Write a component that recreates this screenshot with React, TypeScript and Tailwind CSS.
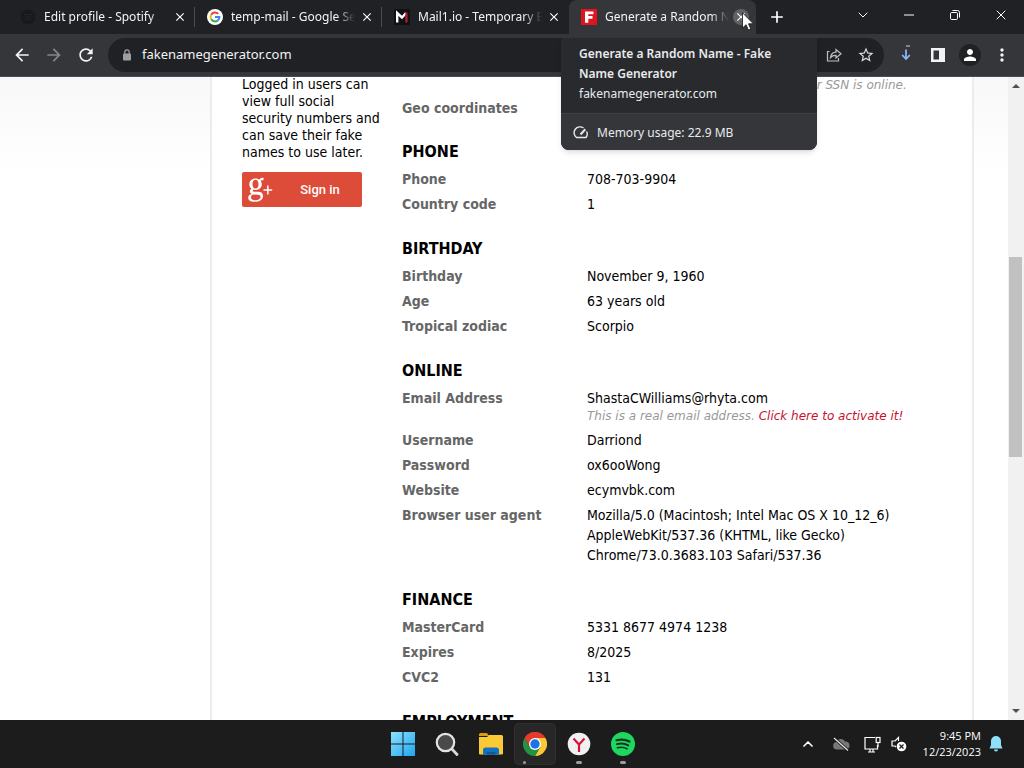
import React from "react";
import {
  MdArrowBack,
  MdArrowForward,
  MdRefresh,
  MdStarBorder,
  MdPerson,
  MdMoreVert,
  MdAdd,
  MdClose,
} from "react-icons/md";
import { ChevronDown, ChevronUp, Minus, X } from "lucide-react";

const uiFont = "font-['Noto_Sans','Open_Sans',sans-serif]";
const pageFont = "font-['DejaVu_Sans_Condensed','Noto_Sans',sans-serif]";

/* Favicons */

const SpotifyDarkIcon = () => (
  <svg viewBox="0 0 16 16" className="size-4">
    <circle cx="8" cy="8" r="7.5" fill="#17191b" />
    <path
      d="M4 5.8q4.5-1.3 8.4.6M4.5 8.3q3.8-1 7 .6M5 10.6q3-.7 5.6.5"
      fill="none"
      stroke="#222427"
      strokeWidth="1.2"
    />
  </svg>
);

const GoogleIcon = () => (
  <svg viewBox="0 0 16 16" className="size-4">
    <circle cx="8" cy="8" r="8" fill="#fff" />
    <g fill="none" strokeWidth="2">
      <path d="M11.2 4.9A4.4 4.4 0 0 0 4.2 5.8" stroke="#ea4335" />
      <path d="M4.2 5.8A4.4 4.4 0 0 0 4.2 10.2" stroke="#fbbc05" />
      <path d="M4.2 10.2A4.4 4.4 0 0 0 10.8 11.4" stroke="#34a853" />
      <path d="M10.8 11.4A4.4 4.4 0 0 0 12.4 8H8" stroke="#4285f4" />
    </g>
  </svg>
);

const MailIcon = () => (
  <svg viewBox="0 0 16 16" className="size-4">
    <rect width="16" height="16" fill="#111114" />
    <path d="M3.200 13.500V4L8 8.500 12 4" fill="none" stroke="#fff" strokeWidth="2.400" />
    <path d="M12.400 3.500v10" stroke="#b3202c" strokeWidth="2.200" />
  </svg>
);

const FakeNameIcon = () => (
  <svg viewBox="0 0 16 16" className="size-4">
    <rect width="16" height="16" fill="#e0141f" />
    <path d="M4 2.5h8.5v2.8H7.3v1.8h4.2v2.7H7.3v4H4z" fill="#fff" />
  </svg>
);

type Tab = {
  title: string;
  icon: React.ReactNode;
  active?: boolean;
  separator?: boolean;
};

const tabs: Tab[] = [
  { title: "Edit profile - Spotify", icon: <SpotifyDarkIcon />, separator: true },
  { title: "temp-mail - Google Search", icon: <GoogleIcon />, separator: true },
  { title: "Mail1.io - Temporary Email", icon: <MailIcon /> },
  { title: "Generate a Random Name", icon: <FakeNameIcon />, active: true },
];

const TabStrip = () => (
  <div className="flex h-[34px] shrink-0 bg-[#202124] pl-2">
    {tabs.map((tab) => (
      <div
        key={tab.title}
        className={`flex w-[187px] items-center py-2 pr-[7px] pl-3 ${
          tab.active ? "rounded-t-lg bg-[#35363a]" : ""
        } ${tab.separator ? "bg-[linear-gradient(#4a4c50,#4a4c50)] bg-[length:1px_20px] bg-right bg-no-repeat" : ""}`}
      >
        {tab.icon}
        <span className="ml-2 min-w-0 flex-1 overflow-hidden [mask-image:linear-gradient(to_right,#000_85%,transparent)] text-xs whitespace-nowrap text-[#f1f3f4]">
          {tab.title}
        </span>
        <button
          aria-label={`Close ${tab.title}`}
          className={`ml-1 flex size-4 items-center justify-center rounded-full text-white ${
            tab.active ? "bg-[#5f6368]" : ""
          }`}
        >
          <MdClose className="size-3.5" />
        </button>
      </div>
    ))}
    <button aria-label="New tab" className="flex w-[42px] items-center justify-center text-white">
      <MdAdd className="size-5" />
    </button>
    <div className="ml-auto flex h-[30px] text-white">
      <button aria-label="Search tabs" className="flex w-[46px] items-center justify-center">
        <ChevronDown className="size-4" strokeWidth={1.5} />
      </button>
      <button aria-label="Minimize" className="flex w-[46px] items-center justify-center">
        <Minus className="size-4" strokeWidth={1.5} />
      </button>
      <button aria-label="Restore" className="flex w-[46px] items-center justify-center">
        <svg viewBox="0 0 12 12" className="size-3" fill="none" stroke="currentColor">
          <rect x="1.500" y="3.500" width="7" height="7" rx="1.200" />
          <path d="M3.500 1.500H8.500a2 2 0 0 1 2 2v5" />
        </svg>
      </button>
      <button aria-label="Close" className="flex w-[46px] items-center justify-center">
        <X className="size-4" strokeWidth={1.5} />
      </button>
    </div>
  </div>
);

const toolButton = "flex size-8 items-center justify-center";

const Toolbar = () => (
  <div className="flex h-[43px] shrink-0 items-center border-b border-[#4a4b4f] bg-[#35363a] px-1.5 text-[#f1f3f4]">
    <button aria-label="Back" className={toolButton}>
      <MdArrowBack className="size-5" />
    </button>
    <button aria-label="Forward" className={`${toolButton} text-[#85878b]`}>
      <MdArrowForward className="size-5" />
    </button>
    <button aria-label="Reload" className={toolButton}>
      <MdRefresh className="size-5" />
    </button>
    <div className="mx-1.5 flex h-[34px] flex-1 items-center rounded-full bg-[#202124] pr-0.5 pl-3">
      <svg viewBox="0 0 14 14" className="size-3.5">
        <rect x="3" y="5.500" width="8" height="7" rx="1" fill="#9aa0a6" />
        <path d="M4.800 6V4a2.200 2.200 0 0 1 4.400 0v2" fill="none" stroke="#9aa0a6" strokeWidth="1.200" />
      </svg>
      <input
        aria-label="Address"
        readOnly
        value="fakenamegenerator.com"
        className="ml-2 min-w-0 flex-1 bg-transparent text-[13px] text-[#f1f3f4] outline-none"
      />
      <button aria-label="Share" className={`${toolButton} text-[#bdc1c6]`}>
        <svg viewBox="0 0 16 16" className="size-4" fill="none" stroke="currentColor" strokeWidth="1.2">
          <path d="M3.500 4.500H1.500v9.500h11v-3" />
          <path d="M4.500 10.500c.6-3.600 2.600-5.200 5.500-5.300V2.500l5 4.200-5 4.200V8.300c-2.300-.1-4.100.5-5.500 2.200z" />
        </svg>
      </button>
      <button aria-label="Bookmark" className={`${toolButton} text-[#dadce0]`}>
        <MdStarBorder className="size-[18px]" />
      </button>
    </div>
    <button aria-label="Downloads" className={toolButton}>
      <svg viewBox="0 0 20 20" className="size-5" fill="none">
        <path d="M10 1h4" stroke="#9aa0a6" strokeWidth="1.5" />
        <path d="M10 4.500v9.500M6.200 10l3.800 4 3.800-4" stroke="#8ab4f8" strokeWidth="1.8" />
      </svg>
    </button>
    <button aria-label="Side panel" className={toolButton}>
      <svg viewBox="0 0 14 14" className="size-3.5">
        <path d="M0 0h14v14H0zM2.500 2.500v9H8v-9z" fill="currentColor" fillRule="evenodd" />
      </svg>
    </button>
    <button aria-label="Profile" className={toolButton}>
      <span className="flex size-[22px] items-center justify-center rounded-full bg-[#202124] text-white">
        <MdPerson className="size-[18px]" />
      </span>
    </button>
    <button aria-label="Menu" className={toolButton}>
      <MdMoreVert className="size-5" />
    </button>
  </div>
);

const TabHoverCard = () => (
  <div
    role="tooltip"
    className="absolute top-[38px] left-[561px] z-10 w-64 overflow-hidden rounded-b-lg bg-[#292a2d] text-xs leading-5 text-[#e8eaed] shadow-md"
  >
    <div className="px-[18px] pt-1.5 pb-[9px]">
      <p className="font-semibold">Generate a Random Name - Fake Name Generator</p>
      <p>fakenamegenerator.com</p>
    </div>
    <div className="flex h-[37px] items-center gap-2 border-t border-[#3f4043] bg-[#35363a] px-3 pt-px">
      <svg viewBox="0 0 16 16" className="size-4" fill="none" stroke="currentColor" strokeWidth="1.400">
        <path d="M10.500 3A5.600 5.600 0 0 0 3.500 12.500h9.500a5.600 5.600 0 0 0 .6-6" />
        <path d="M7.500 9.500 12.300 4.300" strokeWidth="2" />
      </svg>
      <span>Memory usage: 22.9 MB</span>
    </div>
  </div>
);

const MouseCursor = () => (
  <svg viewBox="0 0 12 19" className="absolute top-[12px] left-[742px] z-20 h-[19px] w-3">
    <path
      d="M.500 .800v15.200l3.600-3.300 2.300 5.400 2.400-1-2.300-5.300h4.900z"
      fill="#fff"
      stroke="#111"
      strokeWidth=".8"
    />
  </svg>
);

/* Page content */

const Row = ({ label, children }: { label: string; children?: React.ReactNode }) => (
  <div className="flex pb-[5px]">
    <dt className="w-[185px] shrink-0 font-bold text-[#666]">{label}</dt>
    <dd className="min-w-0 flex-1 text-black">{children}</dd>
  </div>
);

const Section = ({ title, children }: { title: string; children?: React.ReactNode }) => (
  <section className="mt-5">
    <h3 className="mb-[7px] text-base leading-5 font-bold text-black">{title}</h3>
    <dl>{children}</dl>
  </section>
);

const noteClass = "text-xs leading-[17px] text-[#999] italic font-['DejaVu_Sans',sans-serif]";

const Sidebar = () => (
  <aside className="w-[160px] shrink-0">
    <p className="-mt-px w-[140px] text-sm leading-[17px] text-black">
      Logged in users can view full social security numbers and can save their fake names to use
      later.
    </p>
    <button className="mt-[11px] flex h-[35px] w-[120px] items-center rounded-xs bg-[#dd4b39] text-white">
      <svg viewBox="0 0 28 28" className="ml-1 h-7 w-7" fill="#fff">
        <path
          d="M9.500 2.500c3.800 0 6.300 2.500 6.300 5.700s-2.500 5.700-6.300 5.700S3.300 11.400 3.300 8.200s2.400-5.700 6.200-5.700zm0 1.300c-1.900 0-3 1.600-3 4.400s1.100 4.400 3 4.400 3-1.600 3-4.400-1.100-4.400-3-4.400z"
          fillRule="evenodd"
        />
        <path d="M13 4.200c1-1.800 2.200-2.400 4.500-2.400v2.400c-1.700-.2-2.500 0-3.500 1z" />
        <path
          d="M5.500 12.800l2 .7c-1.300 1.200-1 2.200 1.500 2.200h3c3.300 0 5 1.600 5 4.200 0 3.600-3.400 5.800-8.300 5.800-4.200 0-6.500-1.500-6.500-4 0-1.900 1.300-3.200 3.700-3.900-2.800-1.200-2.600-3.400-.4-5zM7 18.500c-1.300.6-2 1.500-2 2.700 0 1.900 1.500 3 4.200 3 3.300 0 5.400-1.200 5.400-3.200 0-1.600-1-2.100-3-2.200z"
          fillRule="evenodd"
        />
        <path d="M17.500 13.300h3.600V9.500h1.500v3.800h3.600v1.500h-3.600v3.800h-1.500v-3.800h-3.600z" />
      </svg>
      <span className="flex-1 pl-1 text-center font-[Roboto,sans-serif] text-[13px] font-medium">
        Sign in
      </span>
    </button>
  </aside>
);

const Details = () => (
  <main className="min-w-0 flex-1 text-sm leading-5">
    <p className={`ml-[185px] whitespace-nowrap ${noteClass}`}>
      You should click here to find out if your SSN is online.
    </p>
    <dl className="mt-1 -mb-px">
      <Row label="Geo coordinates" />
    </dl>
    <Section title="PHONE">
      <Row label="Phone">708-703-9904</Row>
      <Row label="Country code">1</Row>
    </Section>
    <Section title="BIRTHDAY">
      <Row label="Birthday">November 9, 1960</Row>
      <Row label="Age">63 years old</Row>
      <Row label="Tropical zodiac">Scorpio</Row>
    </Section>
    <Section title="ONLINE">
      <Row label="Email Address">
        ShastaCWilliams@rhyta.com
        <p className={noteClass}>
          This is a real email address.{" "}
          <a href="#activate" className="text-[#c8102e]">
            Click here to activate it!
          </a>
        </p>
      </Row>
      <Row label="Username">Darriond</Row>
      <Row label="Password">ox6ooWong</Row>
      <Row label="Website">ecymvbk.com</Row>
      <Row label="Browser user agent">
        Mozilla/5.0 (Macintosh; Intel Mac OS X 10_12_6)
        <br />
        AppleWebKit/537.36 (KHTML, like Gecko)
        <br />
        Chrome/73.0.3683.103 Safari/537.36
      </Row>
    </Section>
    <Section title="FINANCE">
      <Row label="MasterCard">5331 8677 4974 1238</Row>
      <Row label="Expires">8/2025</Row>
      <Row label="CVC2">131</Row>
    </Section>
    <Section title="EMPLOYMENT" />
  </main>
);

const Scrollbar = () => (
  <div className="flex w-4 shrink-0 flex-col bg-[#f1f1f1] text-[#505050]">
    <svg viewBox="0 0 16 17" className="h-[17px] w-4">
      <path d="M4 11h8L8 7z" fill="currentColor" />
    </svg>
    <div className="mt-[163px] ml-px h-[200px] w-[13px] bg-[#c1c1c1]" />
    <svg viewBox="0 0 16 17" className="mt-auto h-[17px] w-4">
      <path d="M4 6h8l-4 4z" fill="currentColor" />
    </svg>
  </div>
);

/* Taskbar */

const WindowsIcon = () => (
  <svg viewBox="0 0 24 24" className="size-6">
    <defs>
      <linearGradient id="win" x1="0" y1="0" x2="1" y2="1">
        <stop offset="0" stopColor="#8be2ff" />
        <stop offset="1" stopColor="#1fa5f0" />
      </linearGradient>
    </defs>
    <path d="M0 0h11.500v11.500H0zM12.500 0H24v11.500H12.500zM0 12.500h11.500V24H0zM12.500 12.500H24V24H12.500z" fill="url(#win)" />
  </svg>
);

const SearchIcon = () => (
  <svg viewBox="0 0 24 24" className="size-6">
    <path d="m16.500 16.500 5.500 6" stroke="#d8d8d8" strokeWidth="2.800" strokeLinecap="round" />
    <circle cx="10.500" cy="10.500" r="8.700" fill="#4a4a4a" stroke="#e4e4e4" strokeWidth="2.200" />
  </svg>
);

const FolderIcon = () => (
  <svg viewBox="0 0 24 24" className="size-6">
    <path d="M0 2.500A1.500 1.500 0 0 1 1.500 1H8l2 3H0z" fill="#d99b13" />
    <path d="M0 5h8l2-2h12.500A1.500 1.500 0 0 1 24 4.500v17a1 1 0 0 1-1 1H1a1 1 0 0 1-1-1z" fill="#fbc935" />
    <path d="M4 22.500V18a2.500 2.500 0 0 1 2.500-2.500h11A2.500 2.500 0 0 1 20 18v4.500z" fill="#1172c4" />
    <path d="M7.500 22.500V20h9v2.500z" fill="#0b589d" />
  </svg>
);

const ChromeIcon = () => (
  <svg viewBox="0 0 24 24" className="size-6">
    <path d="M12 12 1.600 6A12 12 0 0 1 22.400 6z" fill="#e33b2e" />
    <path d="M12 12V6h10.400A12 12 0 0 1 12 24l5.200-9z" fill="#fcc934" />
    <path d="M12 12l5.200 3L12 24A12 12 0 0 1 1.600 6l5.200 9z" fill="#229342" />
    <path d="M1.600 6A12 12 0 0 1 22.400 6H12l-5.200 9z" fill="#e33b2e" />
    <circle cx="12" cy="12" r="6" fill="#fff" />
    <circle cx="12" cy="12" r="4.700" fill="#1a73e8" />
  </svg>
);

const YandexIcon = () => (
  <svg viewBox="0 0 24 24" className="size-6">
    <circle cx="12" cy="12" r="11.300" fill="#f1f1f1" />
    <path d="m6.500 6.500 5.500 6 5.500-6M12 12.500v7.500" fill="none" stroke="#d3183f" strokeWidth="2.200" />
  </svg>
);

const SpotifyIcon = () => (
  <svg viewBox="0 0 24 24" className="size-6">
    <circle cx="12" cy="12" r="12" fill="#1ed760" />
    <g fill="none" stroke="#14351f" strokeLinecap="round">
      <path d="M5.500 8.300q7-2 13 1.200" strokeWidth="2.200" />
      <path d="M6 12.200q6-1.700 11.300 1.200" strokeWidth="1.900" />
      <path d="M6.500 15.800q5-1.400 9.500 1" strokeWidth="1.600" />
    </g>
  </svg>
);

const apps = [
  { name: "Start", icon: <WindowsIcon />, mark: "" },
  { name: "Search", icon: <SearchIcon />, mark: "" },
  { name: "File Explorer", icon: <FolderIcon />, mark: "" },
  { name: "Chrome", icon: <ChromeIcon />, mark: "w-[3px]", active: true },
  { name: "Yandex", icon: <YandexIcon />, mark: "w-1.5" },
  { name: "Spotify", icon: <SpotifyIcon />, mark: "w-1.5" },
];

const Taskbar = () => (
  <footer className="grid h-12 shrink-0 grid-cols-[1fr_auto_1fr] bg-[#1c1c1c] text-white">
    <div />
    <div className="flex items-center pl-px">
      {apps.map((app) => (
        <button
          key={app.name}
          aria-label={app.name}
          className={`relative mx-0.5 flex size-10 items-center justify-center rounded ${
            app.active ? "bg-[#272727] ring-1 ring-[#303030]" : ""
          }`}
        >
          {app.icon}
          {app.mark && (
            <span
              className={`absolute bottom-0 h-[3px] rounded-full bg-[#9d9d9d] ${app.mark} ${
                app.active ? "left-2" : ""
              }`}
            />
          )}
        </button>
      ))}
    </div>
    <div className="flex items-center justify-end pr-[21px]">
      <button aria-label="Show hidden icons" className="mr-4">
        <ChevronUp className="size-4" strokeWidth={2.5} />
      </button>
      <svg viewBox="0 0 18 16" className="mr-3.5 h-4 w-[18px]">
        <path d="M4.500 13.500a3.800 3.800 0 0 1-.3-7.500A5 5 0 0 1 13 5.500a4 4 0 0 1 1 8z" fill="#777" />
        <path d="m2 2 14 12.500" stroke="#1c1c1c" strokeWidth="3" />
        <path d="m2 2 14 12.500" stroke="#e8e8e8" strokeWidth="1.200" />
      </svg>
      <svg viewBox="0 0 17 17" className="mr-2.5 size-[17px]" fill="none" stroke="currentColor" strokeWidth="1.200">
        <path d="M11 1.500H1v11.500h12.500V9M4 16h7M6 13v3M9 13v3" />
        <rect x="12.200" y="1.500" width="3.800" height="5" />
        <path d="M14 6.500V11" />
      </svg>
      <svg viewBox="0 0 16 16" className="mr-4 size-4" fill="none" stroke="currentColor" strokeWidth="1.200">
        <path d="M7.500 5V1.500L4 5H1v5h3l1 1" />
        <circle cx="10.500" cy="10.500" r="4.800" fill="#fff" stroke="none" />
        <path d="m8.500 8.500 4 4M12.500 8.500l-4 4" stroke="#1c1c1c" />
      </svg>
      <div className="text-right text-[11px] leading-4 font-['Open_Sans',sans-serif] whitespace-nowrap">
        <p>9:45 PM</p>
        <p>12/23/2023</p>
      </div>
      <svg viewBox="0 0 14 16" className="ml-2 h-4 w-3.5" fill="#8fe0fb">
        <path d="M7 0a5 5 0 0 0-5 5v4L.500 12.500h13L12 9V5a5 5 0 0 0-5-5zM5 13.500a2 2 0 0 0 4 0z" />
      </svg>
    </div>
  </footer>
);

const App = () => {
  return (
    <div className={`relative flex h-screen flex-col overflow-hidden bg-white ${uiFont}`}>
      <TabStrip />
      <Toolbar />
      <div className={`flex min-h-0 flex-1 ${pageFont}`}>
        <div className="flex min-w-0 flex-1 overflow-hidden bg-linear-to-b from-[#f8f8f8] to-white to-15% pr-[34px] pl-[210px]">
          <div className="flex min-w-0 flex-1 border-x-2 border-[#ececec] bg-white pl-[30px]">
            <Sidebar />
            <Details />
          </div>
        </div>
        <Scrollbar />
      </div>
      <Taskbar />
      <TabHoverCard />
      <MouseCursor />
    </div>
  );
};

export default App;
